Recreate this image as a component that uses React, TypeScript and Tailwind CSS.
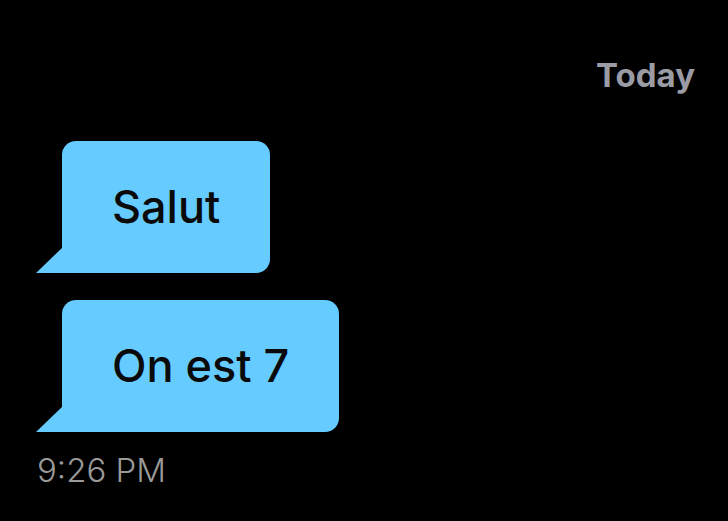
const Bubble = ({ text }: { text: string }) => (
  <div className="relative self-start ml-[62px]">
    <div className="h-[132px] flex items-center px-[50px] bg-[#66ccff] rounded-[14px] rounded-bl-none">
      <span className="text-[45px] font-medium text-[#0a0a0a] leading-none pb-[2px]">{text}</span>
    </div>
    <svg
      className="absolute -left-[26px] bottom-0"
      width="27"
      height="26"
      viewBox="0 0 27 26"
    >
      <path d="M27 0 L0 26 L27 26 Z" fill="#66ccff" />
    </svg>
  </div>
);

export default function App() {
  return (
    <div
      className="w-[728px] h-[521px] bg-black flex flex-col overflow-hidden"
      style={{ fontFamily: "Inter, 'Noto Sans', sans-serif" }}
    >
      <div className="pt-[56px] pr-[33px] text-right text-[33px] font-bold text-[#9b9ba5] leading-[38px]">
        Today
      </div>
      <div className="mt-[47px] flex flex-col gap-[27px]">
        <Bubble text="Salut" />
        <Bubble text="On est 7" />
      </div>
      <div className="mt-[18px] pl-[37px] text-[33px] font-light text-[#9a9a9a] leading-[40px]">
        9:26 PM
      </div>
    </div>
  );
}
